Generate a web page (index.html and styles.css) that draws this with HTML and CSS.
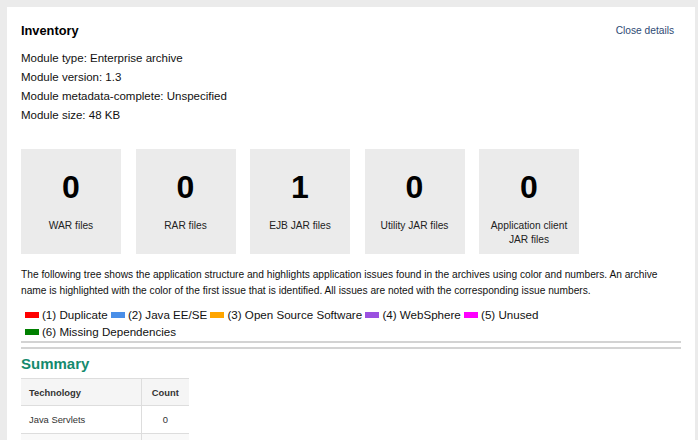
FILE: index.html
```html
<!DOCTYPE html>
<html>
<head>
<meta charset="utf-8">
<link rel="stylesheet" href="styles.css">
</head>
<body>
<div class="panel">
  <div class="header">
    <h2 class="title">Inventory</h2>
    <a class="close" href="#">Close details</a>
  </div>
  <div class="meta">
    <div>Module type: Enterprise archive</div>
    <div>Module version: 1.3</div>
    <div>Module metadata-complete: Unspecified</div>
    <div>Module size: 48 KB</div>
  </div>
  <div class="cards">
    <div class="card"><div class="num">0</div><div class="lbl">WAR files</div></div>
    <div class="card"><div class="num">0</div><div class="lbl">RAR files</div></div>
    <div class="card"><div class="num">1</div><div class="lbl">EJB JAR files</div></div>
    <div class="card"><div class="num">0</div><div class="lbl">Utility JAR files</div></div>
    <div class="card"><div class="num">0</div><div class="lbl">Application client JAR files</div></div>
  </div>
  <p class="desc">The following tree shows the application structure and highlights application issues found in the archives using color and numbers. An archive name is highlighted with the color of the first issue that is identified. All issues are noted with the corresponding issue numbers.</p>
  <div class="legend">
    <span class="item"><span class="sw red"></span>(1) Duplicate</span>
    <span class="item"><span class="sw blue"></span>(2) Java EE/SE</span>
    <span class="item"><span class="sw orange"></span>(3) Open Source Software</span>
    <span class="item"><span class="sw purple"></span>(4) WebSphere</span>
    <span class="item"><span class="sw magenta"></span>(5) Unused</span>
    <span class="item"><span class="sw green"></span>(6) Missing Dependencies</span>
  </div>
  <div class="rule first"></div>
  <div class="rule second"></div>
  <h3 class="summary">Summary</h3>
  <table class="tbl">
    <thead><tr><th class="c1">Technology</th><th class="c2">Count</th></tr></thead>
    <tbody>
      <tr><td class="c1">Java Servlets</td><td class="c2">0</td></tr>
      <tr><td class="c1">JavaServer Pages</td><td class="c2">0</td></tr>
    </tbody>
  </table>
</div>
</body>
</html>
```
FILE: styles.css
```css
html, body {
  margin: 0;
  padding: 0;
  background: #ebebeb;
  font-family: "Liberation Sans", Arial, sans-serif;
  color: #111;
  overflow: hidden;
}
body {
  padding: 7px 3px 0 7px;
}
.panel {
  background: #fff;
  padding: 13px 14px 20px 14px;
  min-height: 500px;
}
.header {
  display: flex;
  justify-content: space-between;
  align-items: center;
  height: 20px;
}
.title {
  margin: 0;
  font-size: 12.8px;
  font-weight: bold;
  color: #000;
}
.close {
  font-size: 10.2px;
  color: #2e4a74;
  text-decoration: none;
  margin-right: 7px;
}
.meta {
  margin-top: 8.5px;
  font-size: 11.5px;
  line-height: 19px;
}
.cards {
  display: flex;
  gap: 14.5px;
  margin-top: 24.5px;
}
.card {
  width: 100px;
  height: 105px;
  background: #ebebeb;
  display: flex;
  flex-direction: column;
  align-items: center;
  text-align: center;
}
.num {
  font-size: 32px;
  font-weight: bold;
  margin-top: 20px;
  line-height: 37px;
  color: #000;
}
.lbl {
  font-size: 10.2px;
  line-height: 14.7px;
  margin-top: 12.5px;
  padding: 0 6px;
  color: #222;
}
.desc {
  margin: 13px 0 0 0;
  font-size: 10.2px;
  line-height: 16px;
}
.legend {
  margin-top: 6.5px;
  font-size: 11.6px;
  line-height: 17px;
  padding-left: 4px;
}
.item {
  white-space: nowrap;
}
.sw {
  display: inline-block;
  width: 14px;
  height: 6px;
  margin-right: 3px;
  vertical-align: 1px;
}
.red { background: #ff0000; }
.blue { background: #4a8fe8; }
.orange { background: #ffa500; }
.purple { background: #9b51e0; }
.magenta { background: #ff00ff; }
.green { background: #008000; }
.rule {
  height: 2px;
  background: #d3d3d3;
}
.rule.first {
  margin-top: 1.5px;
}
.rule.second {
  margin-top: 4px;
}
.summary {
  margin: 6px 0 5px 0;
  font-size: 15px;
  font-weight: bold;
  color: #148a6e;
  line-height: 18px;
}
.tbl {
  border-collapse: collapse;
  font-size: 9.4px;
  color: #333;
}
.tbl th {
  background: #f5f5f5;
  font-weight: bold;
  height: 27px;
  border-top: 1px solid #ddd;
  border-bottom: 1px solid #ddd;
  padding: 0 8px;
  box-sizing: border-box;
}
.tbl td {
  height: 28px;
  border-bottom: 1px solid #ddd;
  padding: 0 8px;
  box-sizing: border-box;
}
.tbl tbody tr:nth-child(2) td {
  background: #f9f9f9;
}
.c1 {
  width: 120px;
  text-align: left;
  border-right: 1px solid #ddd;
}
.c2 {
  width: 48px;
  text-align: center;
}
```
